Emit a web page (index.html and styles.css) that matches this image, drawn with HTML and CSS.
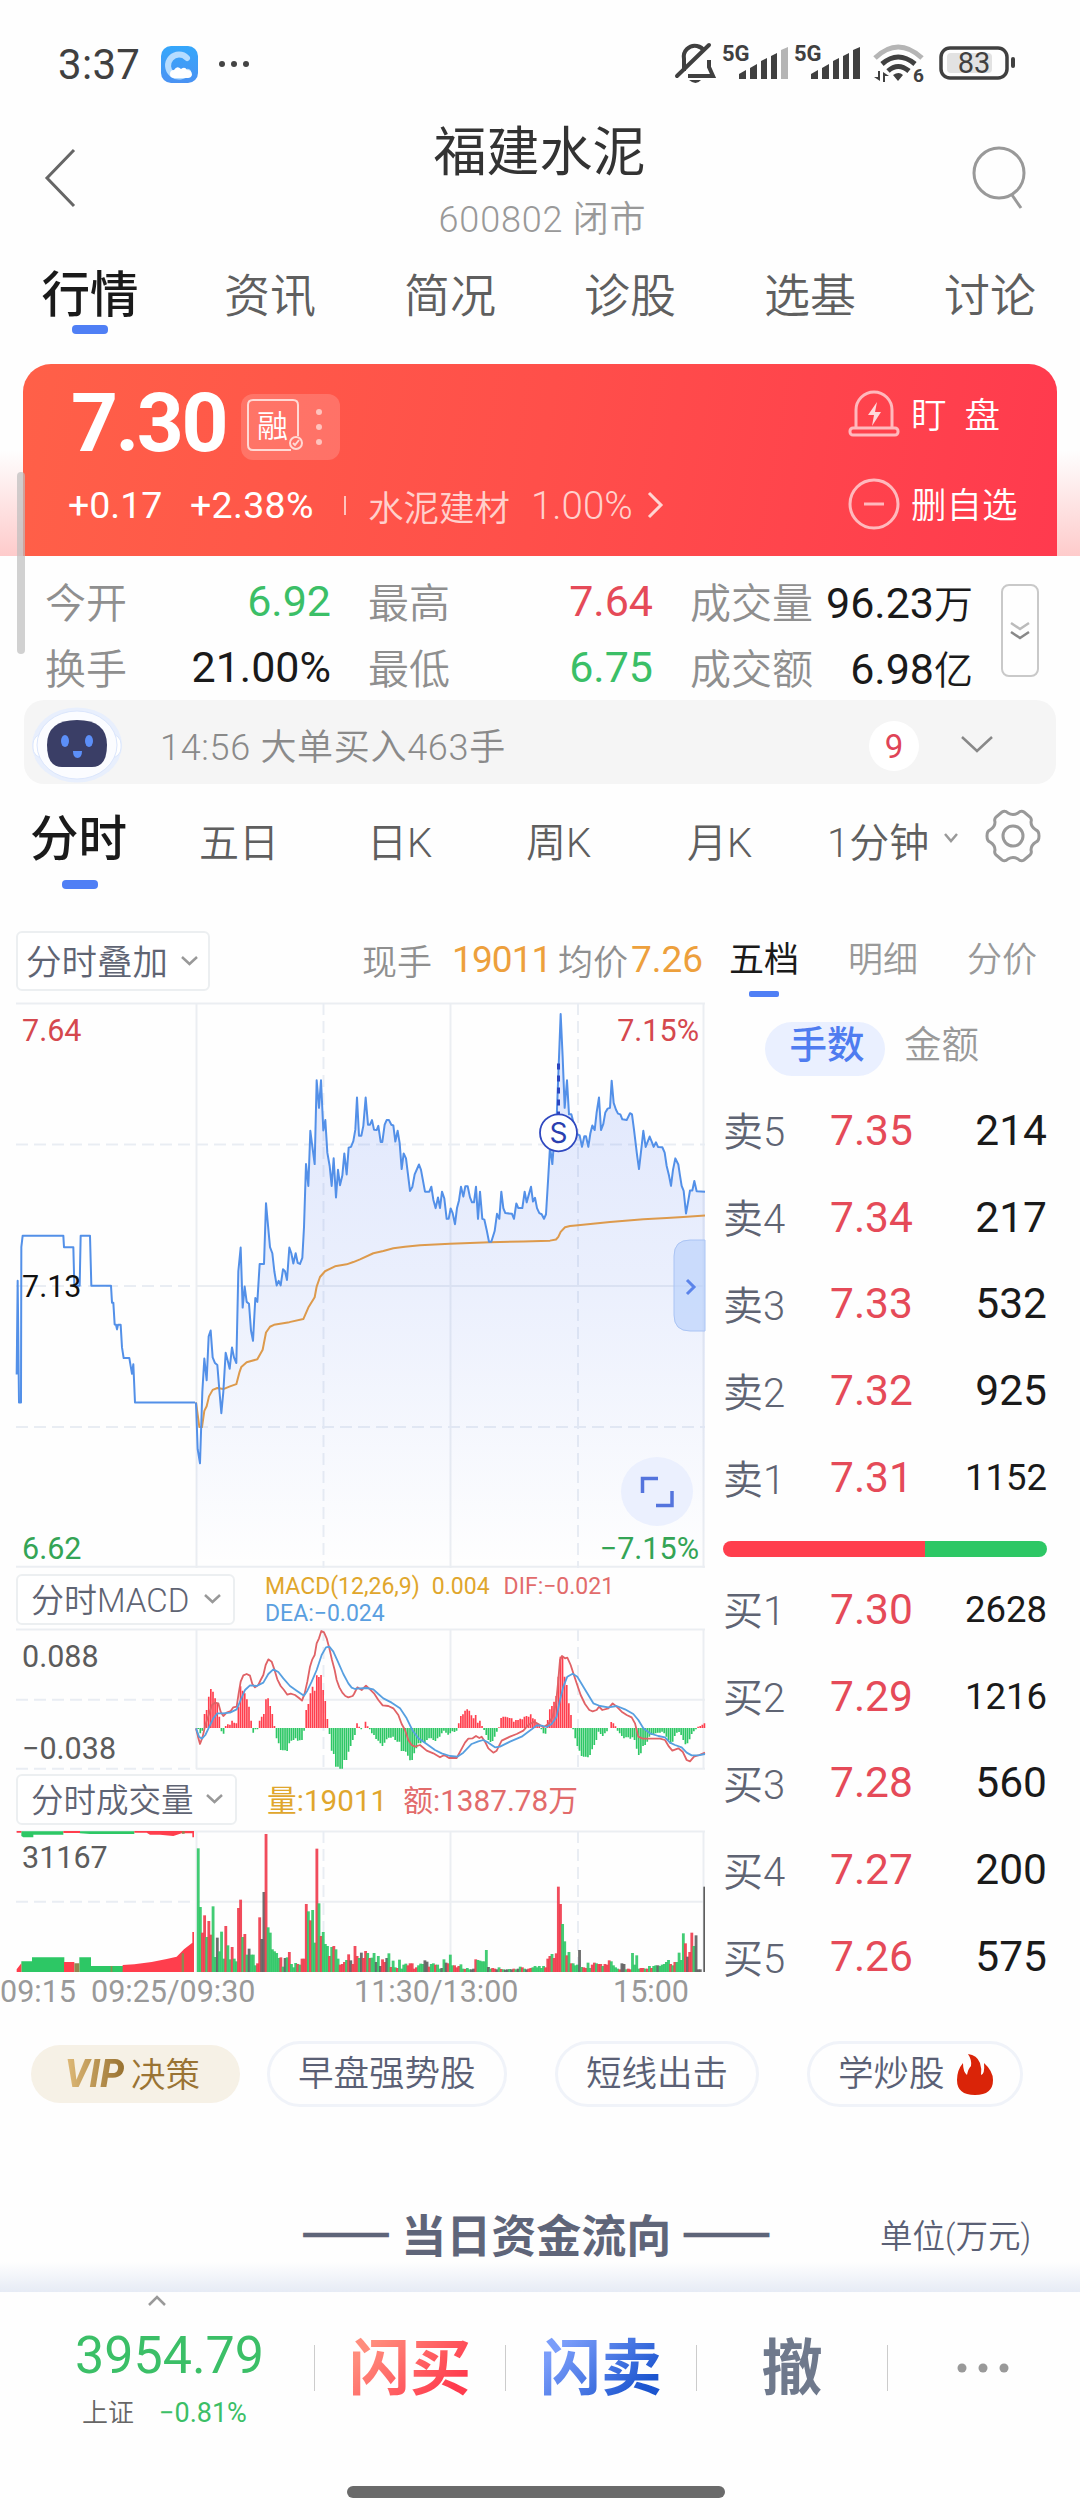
FILE: index.html
```html
<!DOCTYPE html>
<html lang="zh-CN">
<head>
<meta charset="utf-8">
<title>福建水泥 600802</title>
<link rel="stylesheet" href="styles.css">
</head>
<body>
<div class="page">
  <header class="status">
    <span class="clock">3:37</span>
    <svg class="app-icon" width="37" height="37" viewBox="0 0 37 37"><defs><linearGradient id="app" x1="0" y1="0" x2="0" y2="1"><stop offset="0" stop-color="#35a7fb"/><stop offset="1" stop-color="#4a92f3"/></linearGradient></defs><rect width="37" height="37" rx="10" fill="url(#app)"/><path d="M26 12a11 11 0 1 0 1 14" fill="none" stroke="#b5dcff" stroke-width="6" stroke-linecap="round"/><path d="M9 28a4 4 0 0 1 4-4q3-5 7-1 4-3 6 1 5 0 5 5-1 3-4 3H13q-4 0-4-4z" fill="#fff"/></svg>
    <svg class="more-dots" width="32" height="8" viewBox="0 0 32 8" fill="#444"><circle cx="4" cy="4" r="3"/><circle cx="16" cy="4" r="3"/><circle cx="28" cy="4" r="3"/></svg>
    <svg class="status-icons" width="345" height="50" viewBox="672 40 345 50" fill="#404040">
      <path d="M683 72V60a11 11 0 0 1 13-13q5 1 7 5M708 61v7l4 9H687" fill="none" stroke="#404040" stroke-width="4"/>
      <path d="M676 77L708 46" stroke="#404040" stroke-width="4" stroke-linecap="round"/><path d="M688 81h12q-5 6-12 0z"/>
      <text x="721" y="62" class="net">5G</text><text x="793" y="62" class="net">5G</text>
      <path d="M738 75l7-4v9h-7zM749 69l7-4v15h-7zM760 62l6-3v21h-6zM770 57l6-3v26h-6z"/><path d="M780 51l7-3v32h-7z" fill="#b5b5b5"/>
      <path d="M810 75l7-4v9h-7zM821 69l7-4v15h-7zM832 62l6-3v21h-6zM842 57l6-3v26h-6zM852 51l7-3v32h-7z"/>
      <path d="M874 59q23-22 47 0" fill="none" stroke="#b5b5b5" stroke-width="5"/>
      <path d="M881 65q16-14 33 0M887 72q10-9 21 0" fill="none" stroke="#404040" stroke-width="5"/>
      <path d="M892 76q6-4 10 0l-5 6zM879 72v10l-6-4h4v-6zM882 83V73l6 4h-4v6z"/><text x="912" y="83" class="six">6</text>
      <rect x="940" y="49" width="66" height="30" rx="9" fill="none" stroke="#404040" stroke-width="3.5"/><rect x="946" y="54" width="45" height="20" rx="4" fill="#e2e2e2"/><rect x="1010" y="58" width="4" height="11" rx="2"/>
      <text x="973" y="74" class="batt" text-anchor="middle">83</text>
    </svg>
  </header>

  <div class="titlebar">
    <svg width="34" height="62" viewBox="0 0 34 62"><path d="M31 3L4 31l27 28" fill="none" stroke="#666" stroke-width="3"/></svg>
    <div class="titles"><h1>福建水泥</h1><p>600802 闭市</p></div>
    <svg width="56" height="66" viewBox="0 0 56 66" fill="none" stroke="#999" stroke-width="3"><circle cx="28" cy="28" r="25"/><path d="M41 50l9 13"/></svg>
  </div>

  <nav class="tabs"><a class="on">行情</a><a>资讯</a><a>简况</a><a>诊股</a><a>选基</a><a>讨论</a></nav>

  <section class="quote-wrap">
    <div class="quote">
      <div class="q-left">
        <div class="q-price"><b>7.30</b>
          <span class="badge"><svg width="99" height="66" viewBox="0 0 99 66" fill="none" stroke="#ffd9d4" stroke-width="2"><path d="M50 56H12q-5 0-5-5V11q0-5 5-5h40q5 0 5 5v31"/><circle cx="55" cy="49" r="6"/><path d="M52 49l2 2 4-5"/><g fill="#ffc3bd" stroke="none"><circle cx="78" cy="18" r="3"/><circle cx="78" cy="33" r="3"/><circle cx="78" cy="48" r="3"/></g><text x="16" y="43" class="rong">融</text></svg></span>
        </div>
        <div class="q-change"><span>+0.17</span><span class="pct">+2.38%</span><i></i><span class="soft">水泥建材</span><span class="soft rate">1.00%</span><svg width="18" height="30" viewBox="0 0 18 30"><path d="M3 3l12 12L3 27" fill="none" stroke="#ffd5d2" stroke-width="3"/></svg></div>
      </div>
      <div class="q-right">
        <div><svg width="52" height="52" viewBox="0 0 52 52" fill="none" stroke="#ffb9bd" stroke-width="3"><path d="M8 40V22a18 18 0 0 1 36 0v18"/><rect x="2" y="40" width="48" height="7" rx="3"/><path d="M29 14l-9 13h6l-2 11 9-14h-6z" fill="#ffd9db" stroke="none"/></svg><span>盯&ensp;盘</span></div>
        <div><svg width="52" height="52" viewBox="0 0 52 52" fill="none" stroke="#ffb9bd" stroke-width="3"><circle cx="26" cy="26" r="24"/><path d="M16 26h20"/></svg><span>删自选</span></div>
      </div>
    </div>
    <div class="scroll"></div>
  </section>

  <section class="stats">
    <dl>
      <dt>今开</dt><dd class="g">6.92</dd><dt>最高</dt><dd class="r">7.64</dd><dt>成交量</dt><dd>96.23<small>万</small></dd>
      <dt>换手</dt><dd>21.00%</dd><dt>最低</dt><dd class="g">6.75</dd><dt>成交额</dt><dd>6.98<small>亿</small></dd>
    </dl>
    <button class="expand"><svg width="22" height="22" viewBox="0 0 22 22" fill="none" stroke-width="2.5"><path d="M2 3l9 6 9-6" stroke="#bbb"/><path d="M2 12l9 6 9-6" stroke="#888"/></svg></button>
  </section>

  <section class="alert">
    <svg width="98" height="80" viewBox="0 0 98 80"><ellipse cx="49" cy="41" rx="45" ry="37.500" fill="#e8effd"/><rect x="5" y="30" width="88" height="24" rx="10" fill="#fff" stroke="#dce7fc"/><ellipse cx="49" cy="41" rx="40" ry="34" fill="#fbfcff" stroke="#dbe6fc"/><path d="M19 41q0-25 30-25t30 25q0 22-15 22H34q-15 0-15-22z" fill="#3a3e66"/><ellipse cx="37" cy="37" rx="4" ry="6" fill="#5c8ff8"/><ellipse cx="61" cy="37" rx="4" ry="6" fill="#5c8ff8"/><path d="M45 47h9q0 7-4.500 7t-4.500-7z" fill="#5c8ff8"/></svg>
    <span class="msg">14:56 大单买入463手</span><span class="count">9</span>
    <svg width="34" height="20" viewBox="0 0 34 20"><path d="M2 3l15 14L32 3" fill="none" stroke="#888" stroke-width="2.500"/></svg>
  </section>

  <nav class="periods"><a class="on">分时</a><a>五日</a><a>日K</a><a>周K</a><a>月K</a><a class="mins">1分钟<svg width="14" height="12" viewBox="0 0 14 12"><path d="M1 2l6 7 6-7" fill="none" stroke="#999" stroke-width="2.500"/></svg></a>
    <svg class="gear" width="58" height="56" viewBox="0 0 58 56" fill="none" stroke="#999" stroke-width="3"><path d="M18 4q3-2 6 1 5 3 10 0 3-3 6-1l6 5q2 2 1 5 0 5 5 8 3 1 3 6t-3 6q-5 3-5 8 1 3-1 5l-6 5q-3 2-6-1-5-3-10 0-3 3-6 1l-6-5q-2-2-1-5 0-5-5-8-3-1-3-6t3-6q5-3 5-8-1-3 1-5z"/><circle cx="29" cy="28" r="10"/></svg>
  </nav>

  <main class="board">
    <div class="charts">
      <div class="overlay-row"><span class="select s1">分时叠加<svg width="17" height="12" viewBox="0 0 17 12"><path d="M1 2l7.500 7L16 2"/></svg></span>
        <span class="now">现手</span><span class="num n1">19011</span><span class="now avg">均价</span><span class="num n2">7.26</span></div>

      <svg class="chart" width="712" height="572" viewBox="0 1000 712 572">
        <defs><linearGradient id="area" gradientUnits="userSpaceOnUse" x1="0" y1="0" x2="0" y2="1500"><stop offset="0" stop-color="#5a82f5" stop-opacity=".2"/><stop offset=".5" stop-color="#5a82f5" stop-opacity=".12"/><stop offset="1" stop-color="#5a82f5" stop-opacity="0"/></linearGradient></defs>
        <g class="grid"><path d="M16 1003.500H705M16 1566.700H705M196.500 1003V1568M450.500 1003V1568M703.500 1003V1568M196 1286H705"/><path class="dash" d="M16 1144.500H705M16 1427H705M16 1286H196M323.500 1003V1568M578 1003V1568"/></g>
        <g id="price" transform="translate(0 990) scale(.33333 .38265)"></g>
        <path d="M558.500 1063.500V1115" stroke="#2b45c0" stroke-width="3" stroke-dasharray="6 6"/>
        <circle cx="558.500" cy="1132.800" r="18.500" fill="#fff" stroke="#3049c0" stroke-width="1.800"/><text x="558.500" y="1143" text-anchor="middle" class="sell">S</text>
        <path d="M705 1240h-15q-16 0-16 16v59q0 16 16 16h15z" fill="#bcd3fb" fill-opacity=".7" stroke="#aac4f4"/><path d="M687 1280l7 7-7 7" fill="none" stroke="#5b84ea" stroke-width="3"/>
        <ellipse cx="657" cy="1491.500" rx="36" ry="34.500" fill="#ebf0fe"/><path d="M642.500 1493v-14.500H658M672 1491v14.500H656" fill="none" stroke="#5474dd" stroke-width="3.500"/>
        <g class="big"><text x="22" y="1040.500" fill="#d5484e">7.64</text><text x="22" y="1296.500" fill="#111">7.13</text><text x="22" y="1558.500" fill="#34a455">6.62</text><text x="699" y="1040.500" text-anchor="end" fill="#d5484e">7.15%</text><text x="699" y="1558.500" text-anchor="end" fill="#34a455">−7.15%</text></g>
      </svg>

      <div class="ind-row"><span class="select s2">分时MACD<svg width="17" height="12" viewBox="0 0 17 12"><path d="M1 2l7.500 7L16 2"/></svg></span>
        <div class="macd-txt"><span class="gold">MACD(12,26,9)</span><span class="gold m2">0.004</span><span class="dif">DIF:−0.021</span><br><span class="dea">DEA:−0.024</span></div></div>
      <svg class="chart" width="712" height="144" viewBox="0 1627 712 144">
        <g class="grid"><path d="M16 1629.500H705M196 1699.700H705M196 1768.700H705M196.500 1629V1769M450.500 1629V1769M703.500 1629V1769"/><path class="dash" d="M16 1699.700H196M16 1768.700H196M323.500 1629V1769M578 1629V1769"/></g>
        <g id="macd" transform="translate(0 1560) scale(.33333)"></g>
        <g class="big" fill="#5c5c5c"><text x="22" y="1666.500">0.088</text><text x="22" y="1759">−0.038</text></g>
      </svg>

      <div class="ind-row"><span class="select s3">分时成交量<svg width="17" height="12" viewBox="0 0 17 12"><path d="M1 2l7.500 7L16 2"/></svg></span>
        <div class="vol-txt"><span class="gold">量:19011</span><span class="dif">额:1387.78万</span></div></div>
      <svg class="chart" width="712" height="190" viewBox="0 1828 712 190">
        <g class="grid"><path d="M16 1831.500H705M196 1901.700H705M196.500 1831V1972M450.500 1831V1972M703.500 1831V1972"/><path class="dash" d="M16 1901.700H196M323.500 1831V1972M578 1831V1972"/></g>
        <g id="volume" transform="translate(0 1560) scale(.33333)">
          <path fill="#2dc765" d="M64 1236V1204H96V1192H193V1236zM238 1236V1192H273V1218H370V1236zM64 814H190V824H100V832H70L64 828zM225 814H403V822H270L240 820z"/>
          <path fill="#ff3e4d" d="M50 1236V1228L64 1210V1236zM192 1236V1206H223V1236zM368 1236V1215L403 1213 455 1206 500 1197 530 1190 552 1168 577 1148V1116H582V1236zM50 813H64V818H50zM190 813H240V819H190zM403 813H582V832H577V820H545L520 828 480 824H450L440 818H403z"/>
          <path fill="#8f8850" d="M223 1236V1210H238V1236zM332 1236V1218H337V1236zM545 1236V1180H552V1236zM546 814H554V821H546z"/>
        </g>
        <g class="big" fill="#5c5c5c"><text x="22" y="1868">31167</text></g>
        <g class="big" fill="#999"><text x="0" y="2002">09:15</text><text x="91" y="2002">09:25/09:30</text><text x="354" y="2002">11:30/13:00</text><text x="613" y="2002">15:00</text></g>
      </svg>
    </div>

    <aside class="book">
      <nav class="book-tabs"><a class="on">五档</a><a>明细</a><a>分价</a></nav>
      <div class="unit"><span class="on">手数</span><span>金额</span></div>
      <ul>
        <li><span>卖5</span><b>7.35</b><em>214</em></li><li><span>卖4</span><b>7.34</b><em>217</em></li><li><span>卖3</span><b>7.33</b><em>532</em></li><li><span>卖2</span><b>7.32</b><em>925</em></li><li><span>卖1</span><b>7.31</b><em class="sm">1152</em></li>
      </ul>
      <div class="ratio"></div>
      <ul>
        <li><span>买1</span><b>7.30</b><em class="sm">2628</em></li><li><span>买2</span><b>7.29</b><em class="sm">1216</em></li><li><span>买3</span><b>7.28</b><em>560</em></li><li><span>买4</span><b>7.27</b><em>200</em></li><li><span>买5</span><b>7.26</b><em>575</em></li>
      </ul>
    </aside>
  </main>

  <section class="chips">
    <a class="vip"><i>VIP</i>决策</a><a class="c1">早盘强势股</a><a class="c2">短线出击</a>
    <a class="c3">学炒股<svg width="38" height="44" viewBox="0 0 38 44"><path d="M12 1q9 1 12 9 2 6 1 12 4-1 3-12 9 8 9 17 0 15-18 15T1 27Q1 17 7 10q0 9 4 12 1-6 4-9 1-6-3-12z" fill="#da2408"/></svg></a>
  </section>

  <section class="flow"><h2><i>——</i> 当日资金流向 <i>——</i></h2><span>单位(万元)</span></section>
  <div class="shade"></div>

  <footer class="bottom">
    <div class="index"><svg width="20" height="12" viewBox="0 0 20 12"><path d="M2 10l8-8 8 8" fill="none" stroke="#999" stroke-width="2.500"/></svg><strong>3954.79</strong><p>上证<span>−0.81%</span></p></div>
    <a><span class="buy">闪买</span></a><a><span class="selling">闪卖</span></a><a><span class="cancel">撤</span></a>
    <a><svg width="54" height="12" viewBox="0 0 54 12" fill="#999"><circle cx="6" cy="6" r="4.500"/><circle cx="27" cy="6" r="4.500"/><circle cx="48" cy="6" r="4.500"/></svg></a>
  </footer>
  <div class="home"></div>
</div>
<script src="charts.js"></script>
</body>
</html>
```
FILE: styles.css
```css
* { box-sizing: border-box; margin: 0; padding: 0; }
body { background: #fff; font-family: Roboto, "Noto Sans CJK SC", sans-serif; color: #1a1a1a; }
.page { width: 1080px; height: 2520px; overflow: hidden; display: flex; flex-direction: column; background: #fefefe; }
.page > * { flex: none; }
svg { display: block; }
a { white-space: nowrap; }
button { background: none; }

.status { height: 118px; padding: 10px 62px 0 58px; display: flex; align-items: center; }
.clock { font-size: 42px; color: #404040; width: 103px; font-weight: 450; letter-spacing: .3px; }
.more-dots { margin-left: 20px; }
.status-icons { margin-left: auto; }
.net { font: 700 22px Roboto, sans-serif; }
.six { font: 700 19px Roboto, sans-serif; }
.batt { font: 400 29px Roboto, sans-serif; }

.titlebar { height: 126px; padding: 0 53px 6px 43px; display: flex; align-items: center; justify-content: space-between; }
.titles { text-align: center; margin-left: 31px; padding-top: 8px; }
h1 { font-size: 53px; line-height: 70px; font-weight: 400; color: #333; padding-top: 2px; }
.titles p { font-size: 36px; line-height: 60px; color: #999; letter-spacing: .8px; font-weight: 350; padding: 2px 0 0 6px; height: 60px; }

.tabs { height: 120px; display: grid; grid-template-columns: repeat(6, 180px); padding-top: 20px; text-align: center; font-size: 46px; line-height: 64px; color: #5f5f5f; font-weight: 350; }
.tabs .on, .periods .on { font-size: 48.500px; font-weight: 500; color: #1a1a1a; }
.tabs .on::after, .periods .on::after { content: ""; display: block; width: 36px; height: 9px; border-radius: 4px; background: #4f7ff5; margin: -3px auto 0; }

.quote-wrap { height: 192px; position: relative; padding: 0 23px; background: linear-gradient(rgba(255,70,70,0) 45%, rgba(255,70,70,.28)); }
.quote { height: 192px; border-radius: 28px 28px 0 0; background: linear-gradient(100deg, #ff6048, #ff4f4a 50%, #ff3a4e); display: flex; justify-content: space-between; color: #fff; }
.q-left { padding: 12px 0 0 48px; }
.q-price { display: flex; height: 91px; }
.q-price b { font-size: 82px; line-height: 94px; width: 170px; letter-spacing: -2.500px; white-space: nowrap; }
.badge { margin-top: 18px; width: 99px; height: 66px; border-radius: 12px; background: rgba(255,255,255,.17); }
.rong { font: 350 31px "Noto Sans CJK SC", sans-serif; fill: #fff; stroke: none; }
.q-change { display: flex; align-items: center; font-size: 37.500px; height: 76px; margin-left: -3px; }
.q-change span:first-child { width: 122px; }
.q-change .pct { width: 154px; letter-spacing: .3px; }
.q-change i { width: 2px; height: 19px; background: #ffc3bd; margin-right: 22px; }
.q-change .soft { font-size: 35.500px; color: #ffd0cc; font-weight: 350; }
.q-change .rate { font-size: 38.500px; margin: 0 13px 0 21px; font-weight: 350; }
.q-right { width: 209px; padding-top: 22px; font-size: 35.500px; font-weight: 350; }
.q-right div { display: flex; align-items: center; gap: 11px; height: 56px; margin-bottom: 34px; white-space: nowrap; }
.q-right span { padding-bottom: 3px; }
.scroll { position: absolute; left: 17px; top: 108px; width: 8px; height: 182px; border-radius: 4px; background: rgba(190,190,190,.7); z-index: 2; }

.stats { height: 144px; display: flex; padding: 12px 0 0 45px; }
dl { width: 928px; display: grid; grid-template-columns: 125px 198px 125px 197px 125px 158px; grid-template-rows: 66px 66px; align-items: center; }
dt { font-size: 41px; color: #8f8f8f; font-weight: 350; white-space: nowrap; padding-bottom: 3px; }
dd { font-size: 43px; white-space: nowrap; justify-self: end; }
dd:nth-of-type(3n+1) { margin-right: 37px; }
dd:nth-of-type(3n+2) { margin-right: 37px; }
dd small { font-size: 39px; font-weight: 350; }
.g { color: #3bbf67; }
.r { color: #e54a58; }
.expand { width: 38px; height: 93px; margin: 16px 0 0 28px; border: 2px solid #c9c9c9; border-radius: 8px; display: flex; align-items: center; justify-content: center; }

.alert { height: 84px; margin: 0 24px; border-radius: 20px; background: #f5f5f5; display: flex; align-items: center; padding: 4px 0 0 4px; }
.msg { margin-left: 34px; width: 709px; font-size: 36px; font-weight: 350; color: #8a8a8a; letter-spacing: .7px; }
.count { width: 50px; height: 50px; border-radius: 25px; background: #fff; color: #df4457; text-align: center; font-size: 33px; line-height: 51px; margin: 4px 41px 0 0; }

.periods { height: 128px; display: flex; padding: 21px 0 0 30px; font-size: 40px; line-height: 77px; color: #5f5f5f; font-weight: 350; }
.periods .on { width: 168px; line-height: 70px; }
.periods .on::after { margin: 5px 0 0 32px; }
.periods a:nth-child(2) { width: 169px; padding-left: 1px; }
.periods a:nth-child(3) { width: 159px; }
.periods a:nth-child(4) { width: 161px; }
.periods a:nth-child(5) { width: 140px; }
.mins { display: flex; align-items: center; gap: 15px; height: 76px; width: 157px; }
.mins svg { margin-bottom: 10px; }
.gear { margin-top: 3px; }

.board { display: flex; height: 1106px; }
.charts { width: 712px; }
.overlay-row { display: flex; align-items: center; height: 88px; padding: 10px 0 0 16px; }
.select { display: flex; align-items: center; justify-content: space-between; border: 2px solid #eceff1; border-radius: 6px; color: #5f6473; font-weight: 350; white-space: nowrap; background: #fff; padding-bottom: 4px; }
.select svg { margin-top: 3px; }
.select path { fill: none; stroke: #999; stroke-width: 2.500; }
.s1 { width: 194px; height: 60px; padding-left: 8px; padding-right: 10px; font-size: 35.500px; }
.s2 { width: 219px; height: 51px; padding-left: 13px; padding-right: 12px; font-size: 33px; }
.s3 { width: 221px; height: 51px; padding-left: 13px; padding-right: 12px; font-size: 32.500px; }
.now { font-size: 35px; color: #8f8f8f; font-weight: 350; margin-left: 152px; width: 90px; padding-bottom: 4px; }
.now.avg { margin-left: 5px; width: 73px; }
.num { font-size: 37px; color: #eda03c; white-space: nowrap; padding-bottom: 3px; }
.n1 { width: 101px; letter-spacing: -.9px; }
.grid path { fill: none; stroke: #e9edf3; stroke-width: 2; }
.grid .dash { stroke-dasharray: 12 6; }
.grid path:first-child { stroke: #ebeef2; }
.big { font: 400 30.500px Roboto, sans-serif; }
.sell { font: 400 28px Inter, sans-serif; fill: #2b3fb0; }
.ind-row { height: 55px; padding-left: 16px; display: flex; align-items: center; }
.chart + .ind-row + .chart + .ind-row { height: 57px; }
.macd-txt { margin-left: 30px; font-size: 23px; line-height: 27px; white-space: nowrap; margin-top: 1px; }
.m2 { margin: 0 14px 0 12px; }
.gold { color: #e0a62c; }
.dif { color: #e26b6b; }
.dea { color: #5a9fe0; }
.vol-txt { margin-left: 30px; font-size: 29.700px; display: flex; gap: 16px; white-space: nowrap; padding-bottom: 2px; }

.book { width: 368px; padding-left: 11px; }
.book-tabs { display: flex; height: 104px; padding: 16px 0 0 6px; line-height: 65px; font-size: 35px; color: #999; font-weight: 350; }
.book-tabs a:nth-child(2) { width: 119px; margin-left: 1px; }
.book-tabs .on { width: 118px; color: #1a1a1a; font-weight: 400; }
.book-tabs .on::after { content: ""; display: block; width: 30px; height: 6px; border-radius: 2px; background: #4f7ff5; margin: -2px 0 0 20px; }
.unit { display: flex; align-items: center; margin: 6px 0 11px 42px; height: 54px; gap: 19px; font-size: 37.500px; color: #999; font-weight: 350; line-height: 47px; }
.unit span { height: 54px; }
.unit .on { width: 120px; border-radius: 27px; background: #eaf0ff; color: #4f7cf0; font-weight: 500; text-align: center; text-indent: 4px; }
.book ul { list-style: none; }
.book li { display: grid; grid-template-columns: 107px 110px 1fr; width: 324px; height: 86.800px; align-items: center; font-size: 42.500px; }
.book li span { font-size: 40px; color: #5f6473; font-weight: 350; padding-bottom: 2px; }
.book li b { font-weight: 400; color: #e54a58; }
.book li em { font-style: normal; text-align: right; }
.book li .sm { font-size: 36.500px; }
.ratio { width: 324px; height: 16px; border-radius: 8px; margin: 20px 0 9px; background: linear-gradient(90deg, #ff3e4d 202px, #2dc765 202px); }

.chips { height: 112px; padding: 23px 0 0 31px; display: flex; align-items: flex-start; font-size: 35.500px; color: #5a6075; font-weight: 350; line-height: 60px; }
.chips a { height: 66px; border: 3px solid #f0f3f9; border-radius: 33px; padding-left: 28px; }
.chips .vip { width: 209px; height: 58px; margin: 4px 27px 0 0; border: 0; background: #f6f1e6; color: #9a7434; line-height: 58px; padding-left: 34px; font-size: 34.500px; font-weight: 350; }
.vip i { font-weight: 800; font-size: 38px; margin-right: 5px; background: linear-gradient(90deg, #e0bb79, #96702f); background-clip: text; color: transparent; padding-right: 2px; }
.c1 { width: 240px; margin-right: 48px; }
.c2 { width: 204px; margin-right: 48px; }
.c3 { width: 216px; display: flex; gap: 11px; }
.c3 svg { margin-top: 9px; }

.flow { height: 132px; padding: 74px 49px 0 301px; display: flex; align-items: center; justify-content: space-between; }
h2 { font-family: "Noto Sans CJK SC", sans-serif; font-size: 45px; line-height: 60px; font-weight: 700; color: #5f6579; white-space: nowrap; padding-top: 2px; }
h2 i { font-style: normal; -webkit-text-stroke: 2.500px #5f6579; }
.flow span { font-size: 32.500px; color: #5a6075; font-weight: 350; }
.shade { height: 30px; background: linear-gradient(#fefefe, #e6ebf5); }

.bottom { height: 194px; display: flex; background: #fefefe; }
.index { width: 314px; padding: 3px 0 0 75px; color: #3bbf67; }
.index svg { margin-left: 72px; }
.index strong { display: block; font-size: 52px; line-height: 60px; font-weight: 400; margin-top: 19px; }
.index p { font-size: 26px; line-height: 40px; margin: 7px 0 0 7px; color: #666; font-weight: 350; white-space: nowrap; }
.index p span { margin-left: 25px; color: #3bbf67; font-weight: 400; font-size: 27px; }
.bottom a { width: 191px; height: 46px; margin-top: 53px; border-left: 1.500px solid #ccc; display: flex; align-items: center; justify-content: center; font-size: 61px; font-weight: 700; }
.bottom a span { line-height: 84px; padding-top: 1px; flex: none; }
.buy { background: linear-gradient(135deg, #ff8c7c 20%, #ff3b4d 80%); background-clip: text; color: transparent; }
.selling { background: linear-gradient(135deg, #7a9dfa 20%, #1c55cf 80%); background-clip: text; color: transparent; }
.cancel { color: #6f798c; }
.home { width: 378px; height: 12px; border-radius: 6px; margin-left: 347px; background: #6a6a6a; }
```
FILE: charts.js
```javascript
const NS = 'http://www.w3.org/2000/svg';
const STEP = 6.355;
const START = 594.5;

function add(id, tag, attrs) {
  const el = document.createElementNS(NS, tag);
  for (const k in attrs) el.setAttribute(k, attrs[k]);
  document.getElementById(id).appendChild(el);
}
function shift(points, dx) {
  return points.trim().split(/\s+/).map(p => { const [x, y] = p.split(','); return (+x + dx) + ',' + y; }).join(' ');
}
function line(id, points, color, width) {
  add(id, 'polyline', { points, fill: 'none', stroke: color, 'stroke-width': width, 'stroke-linejoin': 'round', 'vector-effect': 'non-scaling-stroke' });
}

/* price */
const pre = '50,1005 53,760 57,1078 63,1078 64,672 68,642 190,642 192,672 220,672 223,773 239,773 242,642 270,642 274,773 333,773 336,817 340,817 344,874 348,875 351,887 354,875 362,875 366,934 371,962 388,962 396,1003 400,978 405,1078 585,1078';
const morning = '588,1078 593,1200 600,1237 607,1050 613,963 620,1020 626,905 632,890 638,960 645,975 652,980 658,1045 664,1106 670,1050 677,948 683,968 689,990 696,934 702,960 709,975 715,735 722,673 728,830 734,775 740,815 747,820 753,890 759,917 766,805 772,815 779,716 792,716 798,557 804,615 810,672 817,688 823,735 830,772 836,760 842,772 849,730 855,735 861,758 868,673 874,688 880,715 887,688 893,713 900,716 907,700 912,620 918,455 925,512 931,368 938,415 944,455 950,236 957,308 963,236 970,367 976,340 982,425 989,460 995,512 1001,440 1008,542 1014,470 1020,510 1027,485 1033,427 1040,482 1046,412 1053,410 1060,395 1066,365 1071,281 1077,381';
const rest = '34,381 40,355 47,281 54,352 60,352 66,340 72,365 80,366 85,355 92,397 97,397 104,352 110,340 117,340 124,352 130,354 136,396 143,368 149,400 155,468 161,427 168,440 180,525 187,515 194,482 207,456 213,470 225,527 238,527 244,514 250,548 257,570 264,542 270,570 276,527 283,545 290,598 296,598 302,571 308,583 315,612 321,570 327,550 333,514 340,540 346,513 353,513 360,542 366,555 372,555 378,514 384,598 390,527 397,598 403,600 410,627 417,658 424,658 434,630 441,585 448,598 454,527 460,570 466,583 486,585 492,598 499,558 505,570 517,570 524,527 530,555 543,514 549,553 555,543 561,570 568,583 575,586 582,598 588,586 594,500 600,410 607,455 613,385 620,335 632,63 638,175 644,308 651,236 657,325 664,325 670,345 677,375 689,380 696,410 703,382 708,382 715,410 721,375 727,354 734,366 740,320 747,281 753,366 760,350 766,320 773,310 780,308 785,237 791,295 798,313 804,323 811,325 817,338 830,340 840,322 846,325 852,365 861,430 867,468 874,415 880,368 887,410 899,383 906,398 911,410 918,398 924,410 937,411 944,425 950,460 957,485 963,512 969,470 976,440 985,456 990,485 995,512 1001,525 1008,584 1014,555 1020,524 1027,524 1033,499 1040,526 1065,527';
const session = morning + ' ' + shift(rest, 1050);
add('price', 'polygon', { points: '588,1507 ' + session + ' 2115,1507', fill: 'url(#area)' });
const avg = '588,1078 598,1142 606,1142 613,1100 620,1088 627,1062 638,1045 652,1040 670,1043 690,1036 709,1030 718,1000 724,985 740,973 772,965 788,940 798,895 810,880 822,875 868,868 910,860 925,830 944,803 950,775 960,750 975,735 1005,722 1040,717 1060,711 1080,704 ' +
  shift('70,688 100,682 130,675 165,671 210,667 300,663 420,659 520,657 600,655 618,652 625,645 632,632 645,620 660,617 684,615 780,606 880,599 950,596 1000,593 1065,589', 1050);
line('price', avg, '#dd9a4c', 2);
line('price', pre, '#5390e8', 2);
line('price', session, '#5390e8', 2);

/* MACD histogram and its two lines */
const hist = [-3,-16,-8,42,54,94,117,109,89,74,34,-10,-17,6,11,10,22,16,14,64,125,112,104,86,64,22,-14,-4,-4,22,34,42,86,89,66,42,6,-31,-46,-66,-67,-67,-69,-46,-38,-36,-31,-38,-37,-36,-8,54,72,104,124,112,158,153,159,114,81,27,-18,-68,-78,-116,-116,-122,-122,-96,-96,-71,-54,-36,-21,14,4,-4,0,19,5,-4,-16,-21,-33,-38,-46,-54,-44,-34,-29,-29,-26,-36,-41,-41,-69,-69,-71,-83,-97,-96,-76,-61,-46,-46,-41,-44,-36,-31,-31,-36,-39,-31,-26,-16,-8,-14,-20,-16,-10,-12,-8,14,36,41,52,56,52,38,29,39,16,22,6,-6,-21,-36,-42,-39,-26,-11,2,30,34,34,32,30,29,19,24,24,28,26,34,36,34,41,29,26,14,9,-4,-16,-17,24,56,66,79,96,154,214,214,154,129,74,39,-4,-31,-54,-68,-84,-86,-86,-88,-81,-64,-51,-36,-11,-18,-24,-16,-10,0,18,14,5,-8,-16,-24,-31,-28,-28,-32,-28,-36,-62,-81,-76,-54,-51,-41,-26,-21,-18,-16,-14,-14,-11,-16,-26,-36,-48,-41,-24,-14,-12,-21,-36,-49,-46,-34,-18,-10,-4,4,6,10,14];
let up = '', down = '';
hist.forEach((h, i) => {
  const seg = 'M' + (START + i * STEP).toFixed(1) + ' 504v' + (-h);
  if (h > 0) up += seg; else down += seg;
});
add('macd', 'path', { d: up, stroke: '#ff3e4d', 'stroke-width': 5 });
add('macd', 'path', { d: down, stroke: '#2dc765', 'stroke-width': 5 });
const dif = '588,505 594,530 600,552 608,530 616,495 626,465 636,435 645,428 655,430 662,455 670,468 680,458 692,453 700,442 710,440 716,400 722,365 730,346 740,342 750,347 757,372 765,382 775,375 782,360 790,345 797,315 805,298 815,305 822,325 832,358 842,378 852,390 862,404 872,401 885,405 897,414 906,422 914,400 922,365 930,320 937,298 944,285 950,250 957,235 964,213 972,217 980,235 988,265 996,300 1004,330 1010,360 1018,382 1027,398 1036,408 1045,412 1058,408 ' +
  shift('12,402 22,382 35,390 48,377 60,388 72,400 85,420 98,436 115,438 130,445 145,465 155,492 165,510 175,540 185,555 195,560 210,555 230,572 250,580 270,592 283,585 297,594 320,594 332,572 345,548 355,536 368,535 378,528 388,534 395,530 405,545 415,565 430,578 440,572 455,542 480,530 500,522 520,512 535,495 552,485 565,492 580,502 595,492 608,470 618,430 624,370 630,300 636,288 645,295 652,293 662,315 670,340 680,370 692,405 705,432 718,450 728,454 740,450 747,440 757,450 775,445 788,430 800,440 815,455 830,465 845,472 855,490 865,530 878,536 930,536 945,540 957,560 967,572 985,565 998,575 1010,600 1020,604 1032,590 1048,585 1065,578', 1050);
const dea = '588,505 597,530 606,536 616,525 628,500 640,475 652,460 668,460 690,458 710,448 722,420 735,390 750,376 770,378 790,368 805,342 820,328 835,336 850,355 870,378 890,392 912,407 922,392 935,365 950,330 965,285 978,262 988,260 1000,275 1015,308 1030,342 1045,370 1055,383 1065,387 ' +
  shift('20,386 50,384 70,388 85,402 100,415 125,428 150,445 170,475 187,510 205,535 230,552 255,570 275,580 300,588 322,590 340,578 365,552 385,544 400,540 415,548 435,562 450,560 480,545 515,530 545,508 560,496 575,497 590,501 605,492 620,470 630,420 640,380 652,350 668,341 682,350 700,380 715,405 730,430 750,438 775,442 800,438 825,448 850,462 865,480 880,505 900,520 925,528 945,532 960,548 975,555 995,562 1010,578 1025,586 1045,586 1065,582', 1050);
line('macd', dif, '#e06266', 1.8);
line('macd', dea, '#579fe0', 1.8);

/* volume: bar height followed by its colour, r rising, g falling, k unchanged */
const volume = '371g 195g 118r 170r 105g 153r 112r 197g 45g 103k 62g 121g 40g 138r 80g 38g 75r 40g 32g 192r 217r 105g 114r 52g 70k 52g 52g 20g 26r 164r 99k 240k 414r 134g 118g 68g 62g 57g 42g 44r 16g 42k 44g 60r 24g 14g 27g 24r 22g 40r 40r 204r 182g 155r 186g 88g 370r 206g 108r 120g 84g 78g 48r 75g 78r 68g 40g 22r 24r 30r 36g 53r 35k 24r 78r 48r 42g 58k 42r 63r 57g 42r 43g 57g 30k 48g 18k 38r 30r 42k 56g 15r 34g 14g 12r 37g 10g 22g 25g 20r 26r 26r 10r 14r 20g 25g 24g 35k 31k 16r 24g 26g 22r 22g 10g 12k 38g 28k 26r 52g 20g 20r 14r 18r 23g 10g 9r 12g 8g 8k 10k 38r 36g 34g 32g 32g 66g 15k 10g 12r 10r 8k 14g 9r 8g 7k 8k 9g 8k 10r 8g 10k 16g 14r 10g 8k 10r 12r 14g 18g 14g 18g 12g 18g 14r 40r 48r 54g 42r 56r 256r 204r 144g 92g 50r 60g 26r 26g 20g 22g 66k 15g 14r 12r 28g 12g 22r 28r 26g 24r 24r 18g 24r 22r 35r 32g 20g 14g 10g 8r 26k 24k 8g 10r 8r 57g 22g 50g 10g 12r 12r 10g 10r 18g 12r 18g 20g 20k 18g 22g 24g 30g 36g 24r 20g 30r 30g 58g 36g 116g 86r 46k 60r 118r 78g 110k 8k 8k'.split(' ');
const colors = { r: '#f0394a', g: '#2dc765', k: '#5e5e5e' };
volume.forEach((v, i) => {
  const h = parseInt(v, 10);
  add('volume', 'rect', { x: START + i * STEP - 4, y: 1236 - h, width: 8.5, height: h, fill: colors[v.slice(-1)], 'fill-opacity': .9 });
});
add('volume', 'rect', { x: 2110, y: 980, width: 5, height: 256, fill: '#5e5e5e' });
```
